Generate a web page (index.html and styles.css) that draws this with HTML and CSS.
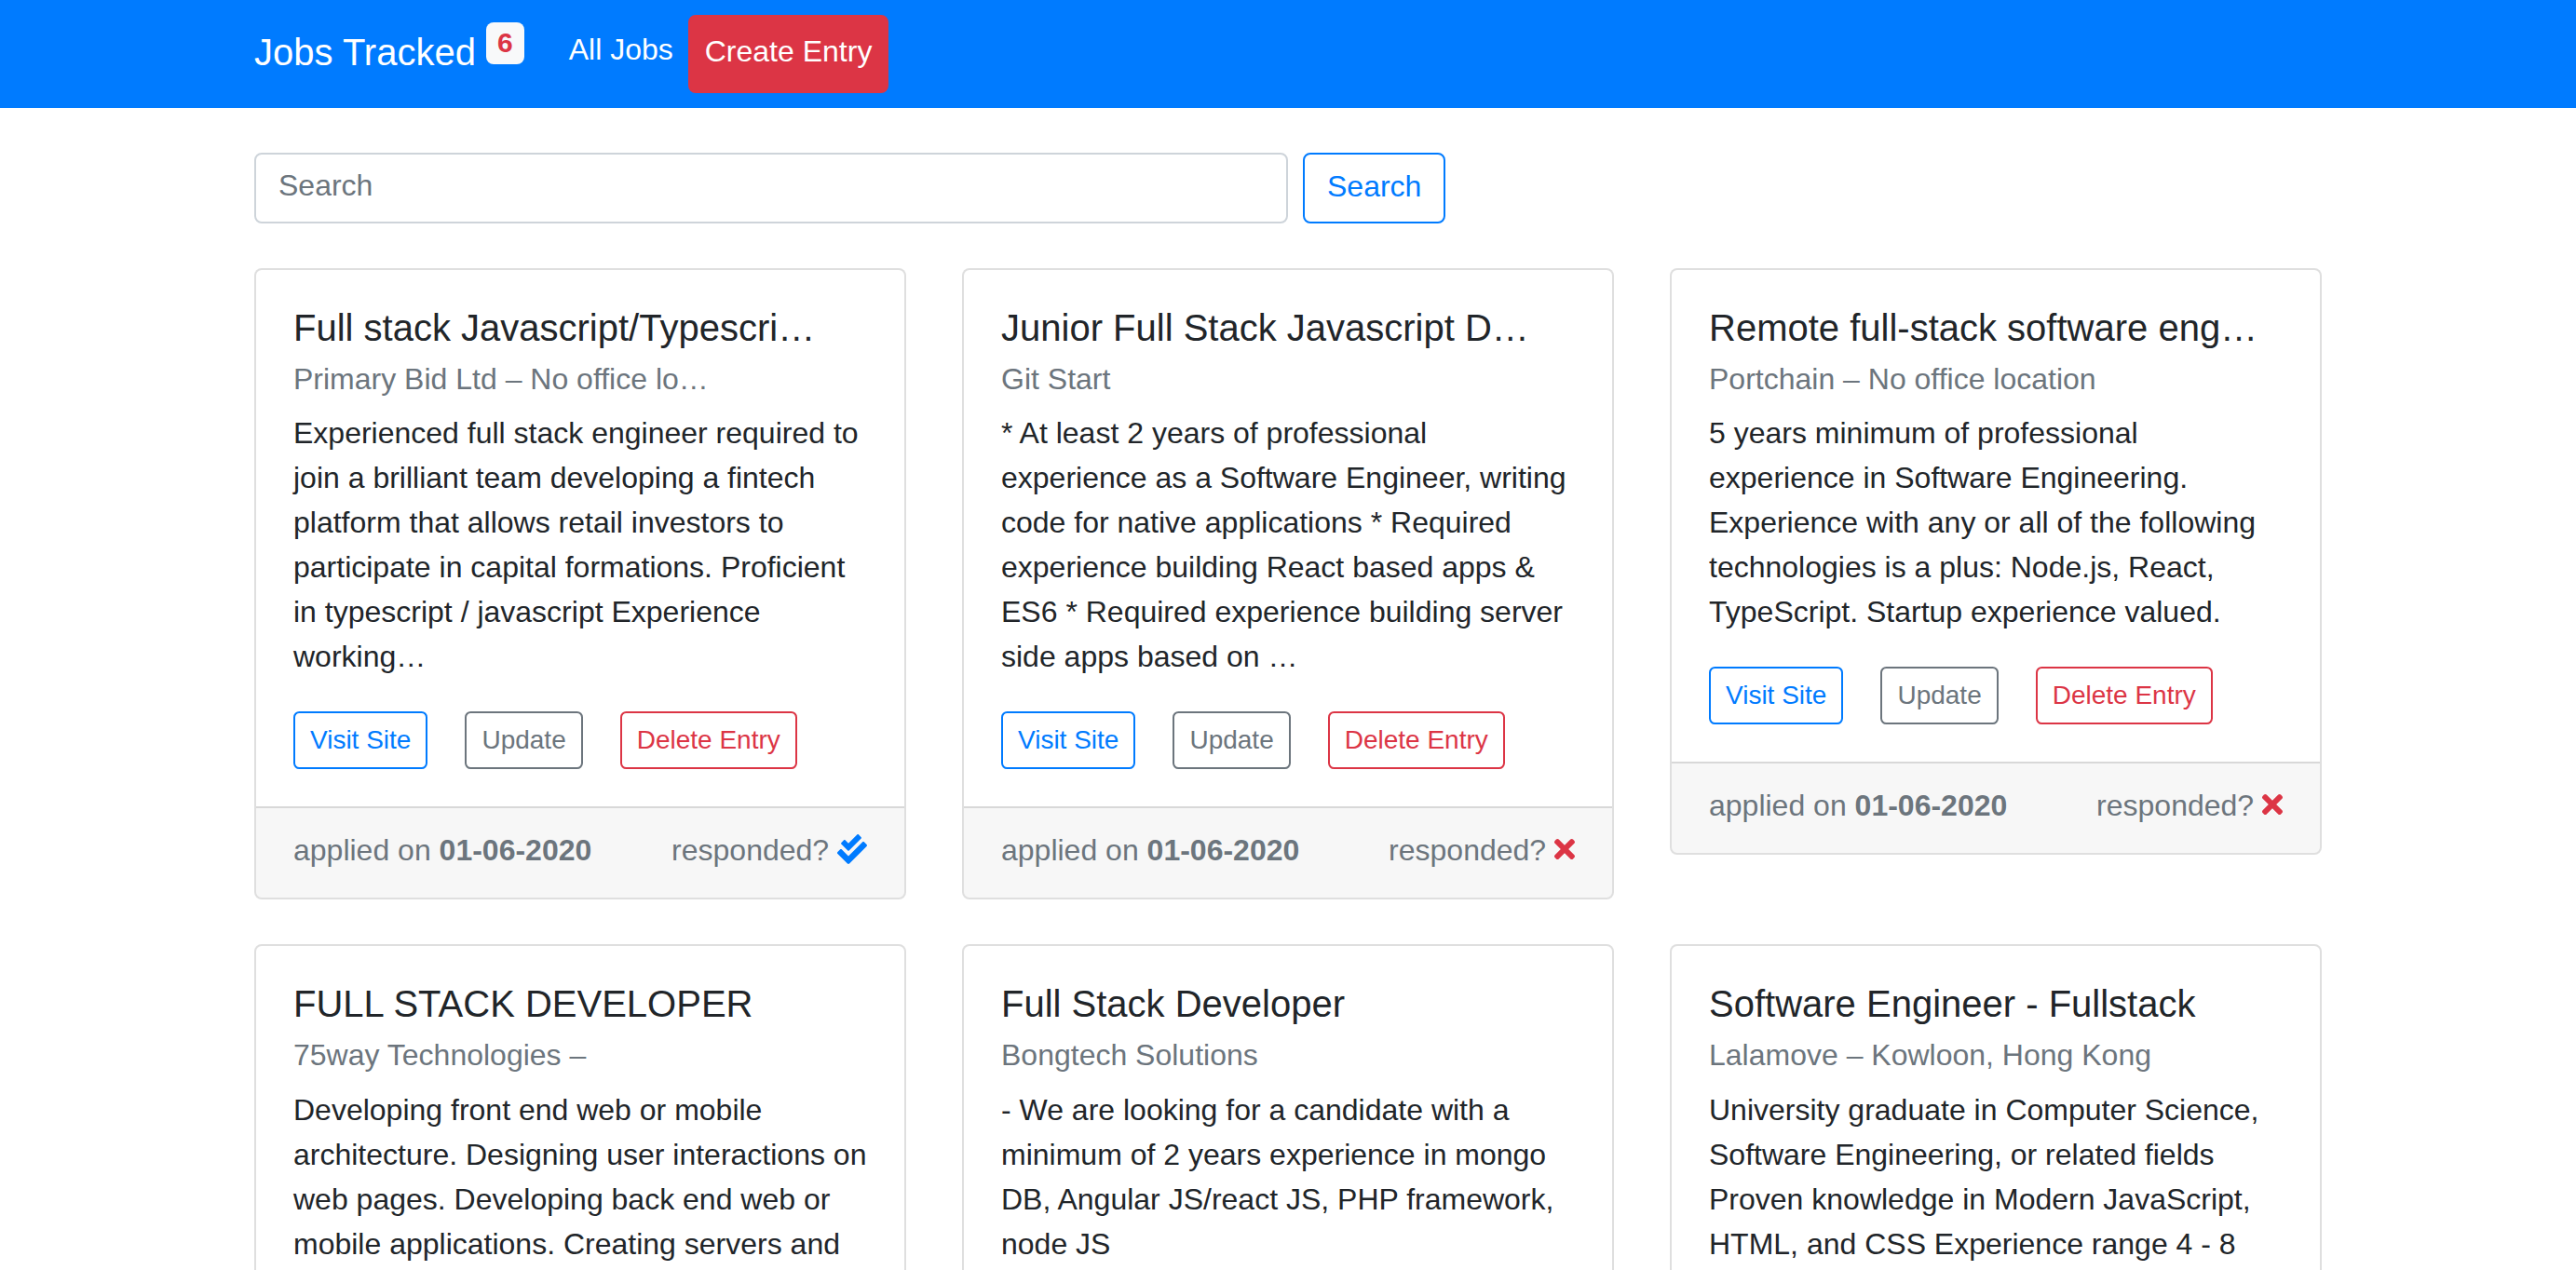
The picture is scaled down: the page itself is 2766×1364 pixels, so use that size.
FILE: index.html
```html
<!DOCTYPE html>
<html lang="en">
<head>
<meta charset="utf-8">
<title>Jobs Tracked</title>
<link rel="stylesheet" href="styles.css">
</head>
<body>
<nav class="navbar">
  <div class="nav-container">
    <a class="brand" href="#">Jobs Tracked <span class="badge">6</span></a>
    <div class="nav-items">
      <a class="nav-link" href="#">All Jobs</a><a class="nav-link nav-create" href="#">Create Entry</a>
    </div>
  </div>
</nav>

<main class="container">
  <form class="search-form">
    <input class="search-input" type="text" placeholder="Search">
    <button class="btn btn-outline-primary" type="button">Search</button>
  </form>

  <div class="card-grid">
    <div class="card">
      <div class="card-body">
        <h5 class="card-title">Full stack Javascript/Typescri…</h5>
        <h6 class="card-subtitle">Primary Bid Ltd – No office lo…</h6>
        <p class="card-text">Experienced full stack engineer required to join a brilliant team developing a fintech platform that allows retail investors to participate in capital formations. Proficient in typescript / javascript Experience working…</p>
        <div class="card-actions"><a class="btn-sm btn-outline-primary" href="#">Visit Site</a><a class="btn-sm btn-outline-secondary card-link" href="#">Update</a><a class="btn-sm btn-outline-danger card-link" href="#">Delete Entry</a></div>
      </div>
      <div class="card-footer">
        <span>applied on <b>01-06-2020</b></span>
        <span>responded? <svg class="icon icon-check" viewBox="0 0 512 512"><path d="M505 174.8l-39.6-39.6c-9.4-9.4-24.6-9.4-33.9 0L192 374.7 80.6 263.2c-9.4-9.4-24.6-9.4-33.9 0L7 302.9c-9.4 9.4-9.4 24.6 0 34L175 505c9.4 9.4 24.6 9.4 33.9 0l296-296.2c9.4-9.5 9.4-24.7.1-34zm-324.3 106c6.2 6.3 16.4 6.3 22.6 0l208-208.2c6.2-6.3 6.2-16.4 0-22.600L366.1 4.7c-6.2-6.3-16.4-6.3-22.6 0L192 156.2l-55.4-55.5c-6.2-6.3-16.4-6.3-22.6 0L68.7 146c-6.3 6.3-6.3 16.4 0 22.7l112 112.1z"/></svg></span>
      </div>
    </div>

    <div class="card">
      <div class="card-body">
        <h5 class="card-title">Junior Full Stack Javascript D…</h5>
        <h6 class="card-subtitle">Git Start</h6>
        <p class="card-text">* At least 2 years of professional experience as a Software Engineer, writing code for native applications * Required experience building React based apps &amp; ES6 * Required experience building server side apps based on …</p>
        <div class="card-actions"><a class="btn-sm btn-outline-primary" href="#">Visit Site</a><a class="btn-sm btn-outline-secondary card-link" href="#">Update</a><a class="btn-sm btn-outline-danger card-link" href="#">Delete Entry</a></div>
      </div>
      <div class="card-footer">
        <span>applied on <b>01-06-2020</b></span>
        <span>responded? <svg class="icon icon-times" viewBox="0 0 352 512"><path d="M242.72 256l100.07-100.07c12.28-12.28 12.28-32.19 0-44.48l-22.24-22.24c-12.28-12.28-32.19-12.28-44.48 0L176 189.28 75.93 89.21c-12.28-12.28-32.19-12.28-44.48 0L9.21 111.45c-12.28 12.28-12.28 32.19 0 44.48L109.28 256 9.21 356.07c-12.28 12.28-12.28 32.19 0 44.48l22.24 22.24c12.28 12.28 32.2 12.28 44.48 0L176 322.72l100.07 100.07c12.28 12.28 32.2 12.28 44.48 0l22.24-22.24c12.28-12.28 12.28-32.19 0-44.48L242.72 256z"/></svg></span>
      </div>
    </div>

    <div class="card">
      <div class="card-body">
        <h5 class="card-title">Remote full-stack software eng…</h5>
        <h6 class="card-subtitle">Portchain – No office location</h6>
        <p class="card-text">5 years minimum of professional experience in Software Engineering. Experience with any or all of the following technologies is a plus: Node.js, React, TypeScript. Startup experience valued.</p>
        <div class="card-actions"><a class="btn-sm btn-outline-primary" href="#">Visit Site</a><a class="btn-sm btn-outline-secondary card-link" href="#">Update</a><a class="btn-sm btn-outline-danger card-link" href="#">Delete Entry</a></div>
      </div>
      <div class="card-footer">
        <span>applied on <b>01-06-2020</b></span>
        <span>responded? <svg class="icon icon-times" viewBox="0 0 352 512"><path d="M242.72 256l100.07-100.07c12.28-12.28 12.28-32.19 0-44.48l-22.24-22.24c-12.28-12.28-32.19-12.28-44.48 0L176 189.28 75.93 89.21c-12.28-12.28-32.19-12.28-44.48 0L9.21 111.45c-12.28 12.28-12.28 32.19 0 44.48L109.28 256 9.21 356.07c-12.28 12.28-12.28 32.19 0 44.48l22.24 22.24c12.28 12.28 32.2 12.28 44.48 0L176 322.72l100.07 100.07c12.28 12.28 32.2 12.28 44.48 0l22.24-22.24c12.28-12.28 12.28-32.19 0-44.48L242.72 256z"/></svg></span>
      </div>
    </div>

    <div class="card">
      <div class="card-body">
        <h5 class="card-title">FULL STACK DEVELOPER</h5>
        <h6 class="card-subtitle">75way Technologies –</h6>
        <p class="card-text">Developing front end web or mobile architecture. Designing user interactions on web pages. Developing back end web or mobile applications. Creating servers and databases for functionality. Ensuring cross-platform…</p>
        <div class="card-actions"><a class="btn-sm btn-outline-primary" href="#">Visit Site</a><a class="btn-sm btn-outline-secondary card-link" href="#">Update</a><a class="btn-sm btn-outline-danger card-link" href="#">Delete Entry</a></div>
      </div>
      <div class="card-footer">
        <span>applied on <b>01-06-2020</b></span>
        <span>responded? <svg class="icon icon-times" viewBox="0 0 352 512"><path d="M242.72 256l100.07-100.07c12.28-12.28 12.28-32.19 0-44.48l-22.24-22.24c-12.28-12.28-32.19-12.28-44.48 0L176 189.28 75.93 89.21c-12.28-12.28-32.19-12.28-44.48 0L9.21 111.45c-12.28 12.28-12.28 32.19 0 44.48L109.28 256 9.21 356.07c-12.28 12.28-12.28 32.19 0 44.48l22.24 22.24c12.28 12.28 32.2 12.28 44.48 0L176 322.72l100.07 100.07c12.28 12.28 32.2 12.28 44.48 0l22.24-22.24c12.28-12.28 12.28-32.19 0-44.48L242.72 256z"/></svg></span>
      </div>
    </div>

    <div class="card">
      <div class="card-body">
        <h5 class="card-title">Full Stack Developer</h5>
        <h6 class="card-subtitle">Bongtech Solutions</h6>
        <p class="card-text">- We are looking for a candidate with a minimum of 2 years experience in mongo DB, Angular JS/react JS, PHP framework, node JS</p>
        <div class="card-actions"><a class="btn-sm btn-outline-primary" href="#">Visit Site</a><a class="btn-sm btn-outline-secondary card-link" href="#">Update</a><a class="btn-sm btn-outline-danger card-link" href="#">Delete Entry</a></div>
      </div>
      <div class="card-footer">
        <span>applied on <b>01-06-2020</b></span>
        <span>responded? <svg class="icon icon-times" viewBox="0 0 352 512"><path d="M242.72 256l100.07-100.07c12.28-12.28 12.28-32.19 0-44.48l-22.24-22.24c-12.28-12.28-32.19-12.28-44.48 0L176 189.28 75.93 89.21c-12.28-12.28-32.19-12.28-44.48 0L9.21 111.45c-12.28 12.28-12.28 32.19 0 44.48L109.28 256 9.21 356.07c-12.28 12.28-12.28 32.19 0 44.48l22.24 22.24c12.28 12.28 32.2 12.28 44.48 0L176 322.72l100.07 100.07c12.28 12.28 32.2 12.28 44.48 0l22.24-22.24c12.28-12.28 12.28-32.19 0-44.48L242.72 256z"/></svg></span>
      </div>
    </div>

    <div class="card">
      <div class="card-body">
        <h5 class="card-title">Software Engineer - Fullstack</h5>
        <h6 class="card-subtitle">Lalamove – Kowloon, Hong Kong</h6>
        <p class="card-text">University graduate in Computer Science, Software Engineering, or related fields Proven knowledge in Modern JavaScript, HTML, and CSS Experience range 4 - 8 years in software development…</p>
        <div class="card-actions"><a class="btn-sm btn-outline-primary" href="#">Visit Site</a><a class="btn-sm btn-outline-secondary card-link" href="#">Update</a><a class="btn-sm btn-outline-danger card-link" href="#">Delete Entry</a></div>
      </div>
      <div class="card-footer">
        <span>applied on <b>01-06-2020</b></span>
        <span>responded? <svg class="icon icon-times" viewBox="0 0 352 512"><path d="M242.72 256l100.07-100.07c12.28-12.28 12.28-32.19 0-44.48l-22.24-22.24c-12.28-12.28-32.19-12.28-44.48 0L176 189.28 75.93 89.21c-12.28-12.28-32.19-12.28-44.48 0L9.21 111.45c-12.28 12.28-12.28 32.19 0 44.48L109.28 256 9.21 356.07c-12.28 12.28-12.28 32.19 0 44.48l22.24 22.24c12.28 12.28 32.2 12.28 44.48 0L176 322.72l100.07 100.07c12.28 12.28 32.2 12.28 44.48 0l22.24-22.24c12.28-12.28 12.28-32.19 0-44.48L242.72 256z"/></svg></span>
      </div>
    </div>
  </div>
</main>
</body>
</html>
```

FILE: styles.css
```css
* {
  box-sizing: border-box;
}

body {
  margin: 0;
  font-family: "Liberation Sans", Arial, sans-serif;
  font-size: 32px;
  line-height: 1.5;
  color: #212529;
  background: #fff;
}

/* Navbar */
.navbar {
  background: #007bff;
  padding: 16px 32px;
}

.nav-container {
  width: 2280px;
  margin: 0 auto;
  padding: 0 30px;
  display: flex;
  align-items: center;
}

.brand {
  display: inline-block;
  font-size: 40px;
  line-height: 1.5;
  padding: 8px 0 12px;
  margin-right: 32px;
  color: #fff;
  text-decoration: none;
  white-space: nowrap;
}

.badge {
  display: inline-block;
  position: relative;
  top: -14px;
  font-size: 30px;
  font-weight: 700;
  line-height: 1;
  padding: 7.5px 12px;
  border-radius: 8px;
  background: #f8f9fa;
  color: #dc3545;
  vertical-align: baseline;
}

.nav-items {
  display: flex;
  align-items: flex-start;
  align-self: stretch;
}

.nav-link {
  display: block;
  padding: 13px 16px 19px;
  color: #fff;
  text-decoration: none;
  white-space: nowrap;
}

.nav-create {
  background: #dc3545;
  border: 2px solid #dc3545;
  border-radius: 8px;
}

/* Main */
.container {
  width: 2280px;
  margin: 0 auto;
  padding: 0 30px;
}

.search-form {
  display: flex;
  align-items: center;
  margin: 48px 0;
}

.search-input {
  width: 1110px;
  height: 76px;
  margin-right: 16px;
  padding: 9px 24px 15px;
  font-family: inherit;
  font-size: 32px;
  line-height: 1.5;
  color: #495057;
  background: #fff;
  border: 2px solid #ced4da;
  border-radius: 8px;
  outline: none;
}

.search-input::placeholder {
  color: #6c757d;
}

.btn {
  display: inline-block;
  font-family: inherit;
  font-size: 32px;
  line-height: 1.5;
  padding: 10px 24px 14px;
  border: 2px solid;
  border-radius: 8px;
  background: transparent;
}

.btn-outline-primary {
  color: #007bff;
  border-color: #007bff;
}

.btn-outline-secondary {
  color: #6c757d;
  border-color: #6c757d;
}

.btn-outline-danger {
  color: #dc3545;
  border-color: #dc3545;
}

/* Cards */
.card-grid {
  display: grid;
  grid-template-columns: repeat(3, 1fr);
  column-gap: 60px;
  row-gap: 48px;
  align-items: start;
}

.card {
  background: #fff;
  border: 2px solid rgba(0, 0, 0, 0.125);
  border-radius: 8px;
  overflow: hidden;
}

.card-body {
  padding: 40px;
}

.card-title {
  font-size: 40px;
  line-height: 1.2;
  font-weight: 500;
  margin: -2px 0 26px;
  white-space: nowrap;
}

.card-subtitle {
  font-size: 32px;
  line-height: 1.2;
  font-weight: 500;
  margin: -14px 0 18px;
  color: #6c757d;
  white-space: nowrap;
}

.card-text {
  margin: -3px 0 35px;
}

.btn-sm {
  display: inline-block;
  vertical-align: middle;
  font-size: 28px;
  line-height: 1.5;
  padding: 8px 16px;
  border: 2px solid;
  border-radius: 6.4px;
  background: transparent;
  text-decoration: none;
}

.card-link {
  margin-left: 40px;
}

.card-footer {
  display: flex;
  justify-content: space-between;
  padding: 21px 40px 27px;
  color: #6c757d;
  background: rgba(0, 0, 0, 0.03);
  border-top: 2px solid rgba(0, 0, 0, 0.125);
}

.card-footer b {
  font-weight: 700;
}

.icon {
  height: 32px;
  vertical-align: -4px;
  overflow: visible;
}

.icon-check {
  width: 32px;
  fill: #007bff;
}

.icon-times {
  width: 22px;
  fill: #dc3545;
}
```
